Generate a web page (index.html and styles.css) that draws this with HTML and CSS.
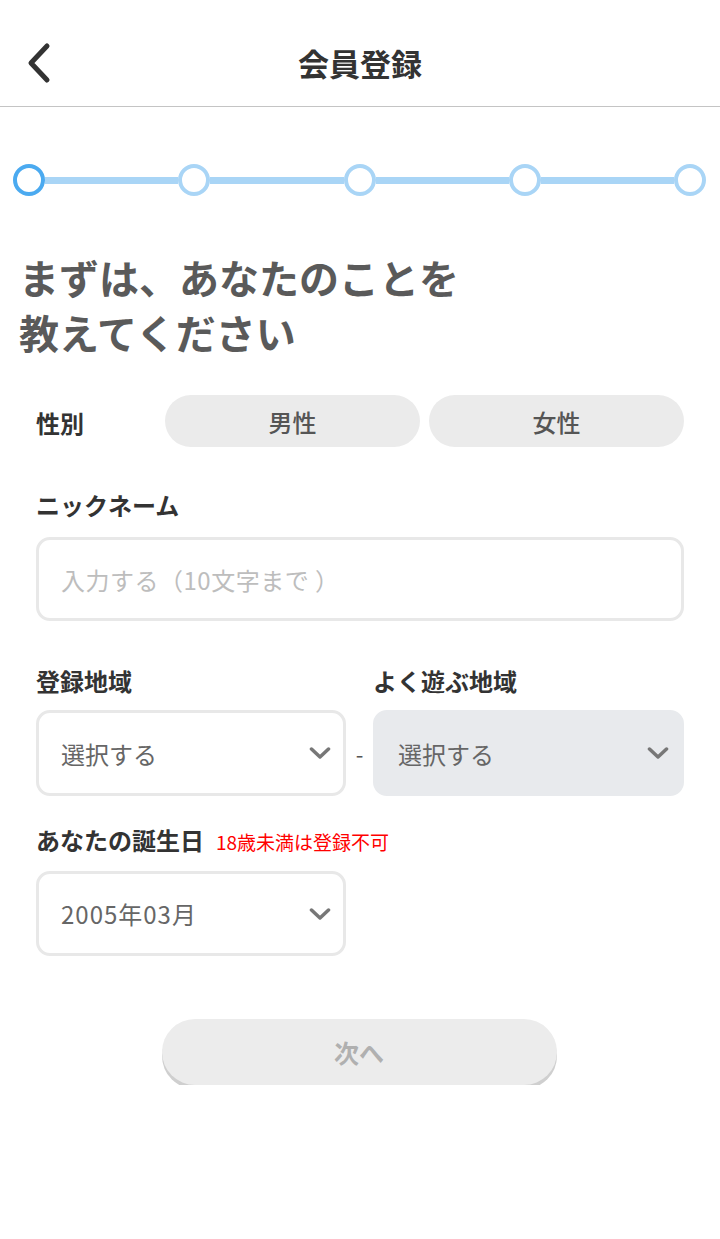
FILE: index.html
```html
<!DOCTYPE html>
<html lang="ja">
<head>
    <meta charset="UTF-8">
    <meta name="viewport" content="width=device-width, initial-scale=1.0">
    <title>会員登録</title>
    <link rel="stylesheet" href="styles.css">
</head>
<body>
    <header class="header">
        <div class="back">
            <svg width="26" height="42" viewBox="0 0 26 42">
                <path d="M21 4 L5 21 L21 38" fill="none" stroke="#333" stroke-width="5" stroke-linecap="round" stroke-linejoin="round"/>
            </svg>
        </div>
        <h1 class="title">会員登録</h1>
        <div></div>
    </header>

    <div class="steps">
        <span class="dot current"></span>
        <span class="bar"></span>
        <span class="dot"></span>
        <span class="bar"></span>
        <span class="dot"></span>
        <span class="bar"></span>
        <span class="dot"></span>
        <span class="bar"></span>
        <span class="dot"></span>
    </div>

    <h2 class="lead">まずは、あなたのことを<br>教えてください</h2>

    <form class="form">
        <div class="gender">
            <span class="label">性別</span>
            <button type="button" class="pill">男性</button>
            <button type="button" class="pill">女性</button>
        </div>

        <div class="label nick-label">ニックネーム</div>
        <div class="field">
            <span class="placeholder">入力する（10文字まで ）</span>
        </div>

        <div class="region">
            <div class="label">登録地域</div>
            <div></div>
            <div class="label">よく遊ぶ地域</div>
            <div class="field select">
                <span class="value">選択する</span>
                <svg class="chev" width="22" height="12" viewBox="0 0 22 12"><path d="M2.5 2 L11 10 L19.5 2" fill="none" stroke="#777" stroke-width="3.5" stroke-linecap="round" stroke-linejoin="round"/></svg>
            </div>
            <div class="dash">-</div>
            <div class="field select disabled">
                <span class="value">選択する</span>
                <svg class="chev" width="22" height="12" viewBox="0 0 22 12"><path d="M2.5 2 L11 10 L19.5 2" fill="none" stroke="#777" stroke-width="3.5" stroke-linecap="round" stroke-linejoin="round"/></svg>
            </div>
        </div>

        <div class="birth-label">
            <span class="label">あなたの誕生日</span>
            <span class="note">18歳未満は登録不可</span>
        </div>
        <div class="field select birth">
            <span class="value date">2005年03月</span>
            <svg class="chev" width="22" height="12" viewBox="0 0 22 12"><path d="M2.5 2 L11 10 L19.5 2" fill="none" stroke="#777" stroke-width="3.5" stroke-linecap="round" stroke-linejoin="round"/></svg>
        </div>

        <div class="actions">
            <button type="button" class="next">次へ</button>
        </div>
    </form>
</body>
</html>
```

FILE: styles.css
```css
body {
    margin: 0;
    padding: 0;
    background-color: #fff;
    font-family: "Noto Sans CJK JP", "Noto Sans", sans-serif;
    color: #333;
}

.header {
    display: grid;
    grid-template-columns: 1fr auto 1fr;
    align-items: center;
    box-sizing: border-box;
    height: 107px;
    padding-top: 18px;
    border-bottom: 1px solid #c4c4c4;
}

.back {
    display: flex;
    padding-left: 26px;
    padding-top: 2px;
}

.title {
    margin: 0;
    font-size: 31px;
    font-weight: 700;
    color: #333;
}

.steps {
    display: flex;
    align-items: center;
    margin-top: 57px;
    padding: 0 14px 0 13px;
}

.dot {
    width: 32px;
    height: 32px;
    box-sizing: border-box;
    border: 4px solid #a9d5f6;
    border-radius: 50%;
    flex-shrink: 0;
}

.dot.current {
    border-color: #4baaf0;
}

.bar {
    flex: 1;
    height: 7px;
    background-color: #a9d5f6;
}

.lead {
    margin: 54px 0 0 19px;
    font-size: 40px;
    line-height: 55px;
    font-weight: 700;
    color: #5a5a5a;
}

.form {
    padding: 0 36px;
}

.label {
    font-size: 24px;
    font-weight: 700;
    line-height: 32px;
    color: #333;
}

.gender {
    display: flex;
    align-items: center;
    gap: 9px;
    margin-top: 35px;
}

.gender .label {
    width: 120px;
    padding-top: 4px;
}

.pill {
    flex: 1;
    height: 52px;
    border: none;
    border-radius: 26px;
    background-color: #ebebeb;
    color: #555;
    font-family: inherit;
    font-size: 24px;
    font-weight: 500;
}

.nick-label {
    margin-top: 42px;
}

.field {
    box-sizing: border-box;
    display: flex;
    align-items: center;
    height: 84px;
    margin-top: 16px;
    padding: 0 12px 0 22px;
    border: 3px solid #e8e8e8;
    border-radius: 14px;
    background-color: #fff;
}

.placeholder {
    font-size: 24px;
    letter-spacing: 0.5px;
    color: #bdbdbd;
}

.region {
    display: grid;
    grid-template-columns: 310px 27px 1fr;
    row-gap: 13px;
    margin-top: 44px;
}

.region .field {
    margin-top: 0;
    height: 86px;
}

.select {
    justify-content: space-between;
}

.value {
    font-size: 24px;
    color: #666;
}

.value.date {
    letter-spacing: 1px;
}

.select.disabled {
    background-color: #e8eaed;
    border-color: #e8eaed;
}

.dash {
    display: flex;
    align-items: center;
    justify-content: center;
    font-size: 22px;
    color: #555;
}

.birth-label {
    display: flex;
    align-items: baseline;
    gap: 12px;
    margin-top: 28px;
}

.note {
    font-size: 19px;
    color: #ff0000;
}

.birth {
    width: 310px;
    height: 85px;
    margin-top: 15px;
}

.actions {
    display: flex;
    justify-content: center;
    margin-top: 63px;
    padding-right: 2px;
}

.next {
    width: 395px;
    height: 66px;
    border: none;
    border-radius: 33px;
    background-color: #ececec;
    box-shadow: 0 4px 0 #cfcfcf;
    color: #b0b0b0;
    font-family: inherit;
    font-size: 25px;
    font-weight: 700;
}
```
